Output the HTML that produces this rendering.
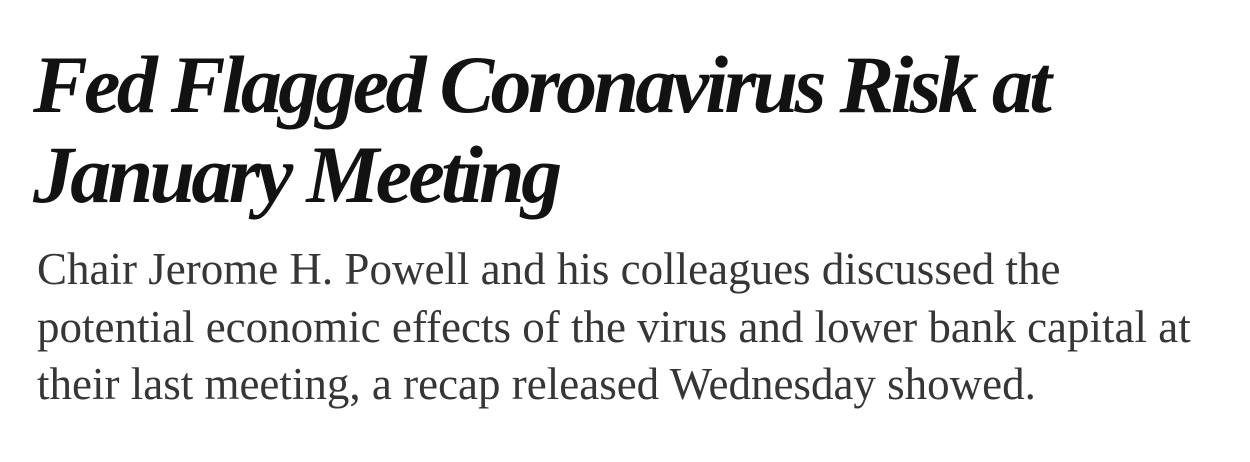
<!DOCTYPE html>
<html><head><meta charset="utf-8"><style>
html,body{margin:0;padding:0;background:#fff;width:1250px;height:462px;overflow:hidden}
h1{position:absolute;left:33px;top:40px;margin:0;font-family:"Liberation Serif",serif;font-weight:bold;font-style:italic;font-size:82px;line-height:90px;letter-spacing:-3.7px;color:#121212;white-space:nowrap}
p{position:absolute;left:37px;top:241px;margin:0;font-family:"Liberation Serif",serif;font-size:45px;line-height:57.5px;color:#363636;white-space:nowrap}
</style></head><body>
<h1>Fed Flagged Coronavirus Risk at<br>January Meeting</h1>
<p>Chair Jerome H. Powell and his colleagues discussed the<br>potential economic effects of the virus and lower bank capital at<br>their last meeting, a recap released Wednesday showed.</p>
</body></html>
